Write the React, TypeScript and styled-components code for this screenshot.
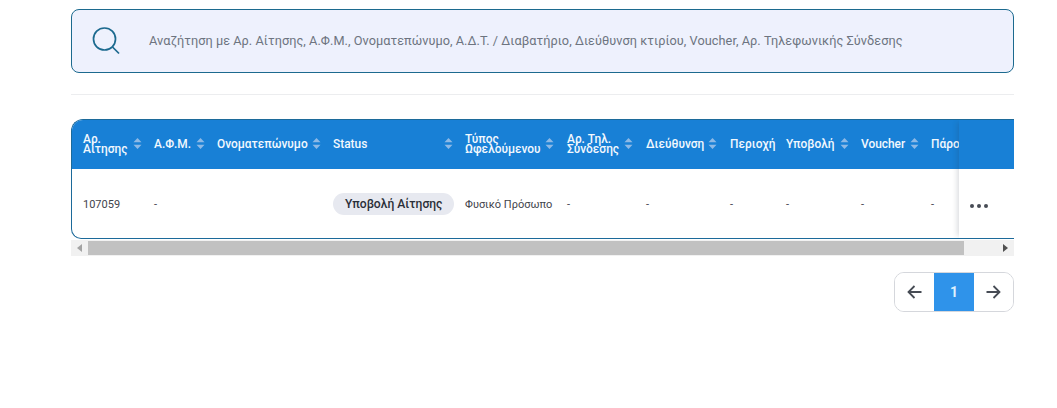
import React from "react";
import styled, { createGlobalStyle } from "styled-components";

const Global = createGlobalStyle`
  html, body { margin: 0; padding: 0; background: #fff; }
  body { font-family: Roboto, "Noto Sans", sans-serif; }
`;

const Page = styled.div`
  width: 943px;
  margin-left: 71px;
  padding-top: 9px;
`;

const SearchBox = styled.div`
  box-sizing: border-box;
  height: 64px;
  display: flex;
  align-items: center;
  gap: 28px;
  padding-left: 19px;
  background: #eef1fd;
  border: 1px solid #1c6a8f;
  border-radius: 8px;
`;

const SearchText = styled.span`
  font-size: 12.73px;
  color: #6d7480;
  letter-spacing: 0.05px;
  padding-bottom: 2px;
`;

const Divider = styled.div`
  height: 1px;
  background: #ecedef;
  margin: 21px 0 24px;
`;

const TableShell = styled.div`
  position: relative;
  box-sizing: border-box;
  height: 120px;
  border-left: 1px solid #1c6a9a;
  border-top: 1px solid #1c6a9a;
  border-bottom: 1px solid #1c6a9a;
  border-radius: 12px 0 0 10px;
  overflow: hidden;
`;

const columns = "70px 63px 116px 132px 102px 79px 84px 56px 75px 70px 95px";

const HeaderRow = styled.div`
  display: grid;
  grid-template-columns: ${columns};
  height: 49px;
  background: #1880d6;
  color: #f2f8fe;
`;

const HeadCell = styled.div<{ $end: number }>`
  display: flex;
  align-items: center;
  justify-content: space-between;
  padding: 0 ${(p) => p.$end}px 2px 12px;
  font-size: 11.9px;
  font-weight: 500;
  line-height: 10px;
  white-space: pre-line;
  &:first-child { padding-left: 11px; }
`;

const HeadLabel = styled.span`
  white-space: pre;
`;

const BodyRow = styled.div`
  display: grid;
  grid-template-columns: ${columns};
  height: 69px;
  align-items: center;
`;

const BodyCell = styled.div`
  padding: 1px 0 0 12px;
  font-size: 11px;
  color: #3f444c;
  white-space: nowrap;
  &:first-child { padding-left: 11px; }
`;

const Pill = styled.span`
  display: inline-flex;
  align-items: center;
  height: 22px;
  padding: 0 12px;
  border-radius: 11px;
  background: #e7e9f0;
  color: #2a2f38;
  font-size: 12.1px;
  font-weight: 500;
`;

const StickyAction = styled.div`
  position: absolute;
  top: 0;
  right: 0;
  bottom: 0;
  width: 55px;
  box-shadow: -4px 0 5px -2px rgba(40, 50, 70, 0.16);
  display: flex;
  flex-direction: column;
`;

const StickyHead = styled.div`
  height: 49px;
  background: #1880d6;
  border-top-right-radius: 13px;
`;

const StickyBody = styled.div`
  flex: 1;
  background: #fff;
  display: flex;
  align-items: center;
  padding-left: 11px;
  padding-top: 4px;
`;

const Dots = styled.div`
  display: flex;
  gap: 3px;
`;

const Dot = styled.i`
  width: 4px;
  height: 4px;
  border-radius: 50%;
  background: #474c55;
`;

const Scrollbar = styled.div`
  display: flex;
  align-items: center;
  height: 16px;
  margin-top: 1px;
  background: #f1f1f1;
`;

const ScrollArrow = styled.div`
  width: 17px;
  flex: none;
  display: flex;
  justify-content: center;
`;

const Thumb = styled.div`
  width: 876px;
  height: 14px;
  background: #c1c1c1;
`;

const ScrollSpacer = styled.div`
  flex: 1;
`;

const Pager = styled.div`
  display: flex;
  justify-content: flex-end;
  margin-top: 16px;
`;

const PagerGroup = styled.div`
  display: flex;
  width: 120px;
  height: 40px;
  box-sizing: border-box;
  border: 1px solid #d5d7dc;
  border-radius: 10px;
  overflow: hidden;
`;

const PagerButton = styled.div<{ $active?: boolean }>`
  flex: 1;
  display: flex;
  align-items: center;
  justify-content: center;
  font-size: 14px;
  font-weight: 700;
  background: ${(p) => (p.$active ? "#2f93ea" : "#fff")};
  color: ${(p) => (p.$active ? "#dff0fd" : "#474c55")};
`;

const SortIcon = () => (
  <svg width="9" height="13" viewBox="0 0 9 13" style={{ flex: "none" }}>
    <path d="M4.5 1 L8.5 5.2 H0.5 Z M4.5 12 L0.5 7.8 H8.5 Z" fill="#8db9e6" />
  </svg>
);

const heads: { label: string; sort: boolean; end: number }[] = [
  { label: "Αρ.\nΑίτησης", sort: true, end: 0 },
  { label: "Α.Φ.Μ.", sort: true, end: 0 },
  { label: "Ονοματεπώνυμο", sort: true, end: 0 },
  { label: "Status", sort: true, end: 0 },
  { label: "Τύπος\nΩφελούμενου", sort: true, end: 1 },
  { label: "Αρ. Τηλ.\nΣύνδεσης", sort: true, end: 1 },
  { label: "Διεύθυνση", sort: true, end: 1 },
  { label: "Περιοχή", sort: false, end: 0 },
  { label: "Υποβολή", sort: true, end: 0 },
  { label: "Voucher", sort: true, end: 0 },
  { label: "Πάροχος", sort: false, end: 0 },
];

const Arrow = ({ flip }: { flip?: boolean }) => (
  <svg width="18" height="18" viewBox="0 0 18 18" fill="none" stroke="#474c55" strokeWidth="1.8"
    style={flip ? { transform: "scaleX(-1)" } : undefined}>
    <path d="M15.5 9 H2.5 M8.5 3 L2.5 9 L8.5 15" />
  </svg>
);

export default function App() {
  return (
    <Page>
      <Global />
      <SearchBox>
        <svg width="30" height="30" viewBox="0 0 30 30" fill="none" stroke="#1c6a8f" strokeWidth="1.7">
          <circle cx="13.5" cy="13" r="11" />
          <path d="M21.5 21 L28 27.5" />
        </svg>
        <SearchText>
          Αναζήτηση με Αρ. Αίτησης, Α.Φ.Μ., Ονοματεπώνυμο, Α.Δ.Τ. / Διαβατήριο, Διεύθυνση κτιρίου, Voucher, Αρ. Τηλεφωνικής Σύνδεσης
        </SearchText>
      </SearchBox>
      <Divider />
      <TableShell>
        <HeaderRow>
          {heads.map((h) => (
            <HeadCell key={h.label} $end={h.end}>
              <HeadLabel>{h.label}</HeadLabel>
              {h.sort && <SortIcon />}
            </HeadCell>
          ))}
        </HeaderRow>
        <BodyRow>
          <BodyCell>107059</BodyCell>
          <BodyCell>-</BodyCell>
          <BodyCell />
          <BodyCell><Pill>Υποβολή Αίτησης</Pill></BodyCell>
          <BodyCell>Φυσικό Πρόσωπο</BodyCell>
          <BodyCell>-</BodyCell>
          <BodyCell>-</BodyCell>
          <BodyCell>-</BodyCell>
          <BodyCell>-</BodyCell>
          <BodyCell>-</BodyCell>
          <BodyCell>-</BodyCell>
        </BodyRow>
        <StickyAction>
          <StickyHead />
          <StickyBody>
            <Dots><Dot /><Dot /><Dot /></Dots>
          </StickyBody>
        </StickyAction>
      </TableShell>
      <Scrollbar>
        <ScrollArrow>
          <svg width="5" height="8" viewBox="0 0 5 8"><path d="M5 0 V8 L0 4 Z" fill="#a3a3a3" /></svg>
        </ScrollArrow>
        <Thumb />
        <ScrollSpacer />
        <ScrollArrow>
          <svg width="5" height="8" viewBox="0 0 5 8"><path d="M0 0 V8 L5 4 Z" fill="#505050" /></svg>
        </ScrollArrow>
      </Scrollbar>
      <Pager>
        <PagerGroup>
          <PagerButton><Arrow /></PagerButton>
          <PagerButton $active>1</PagerButton>
          <PagerButton><Arrow flip /></PagerButton>
        </PagerGroup>
      </Pager>
    </Page>
  );
}
